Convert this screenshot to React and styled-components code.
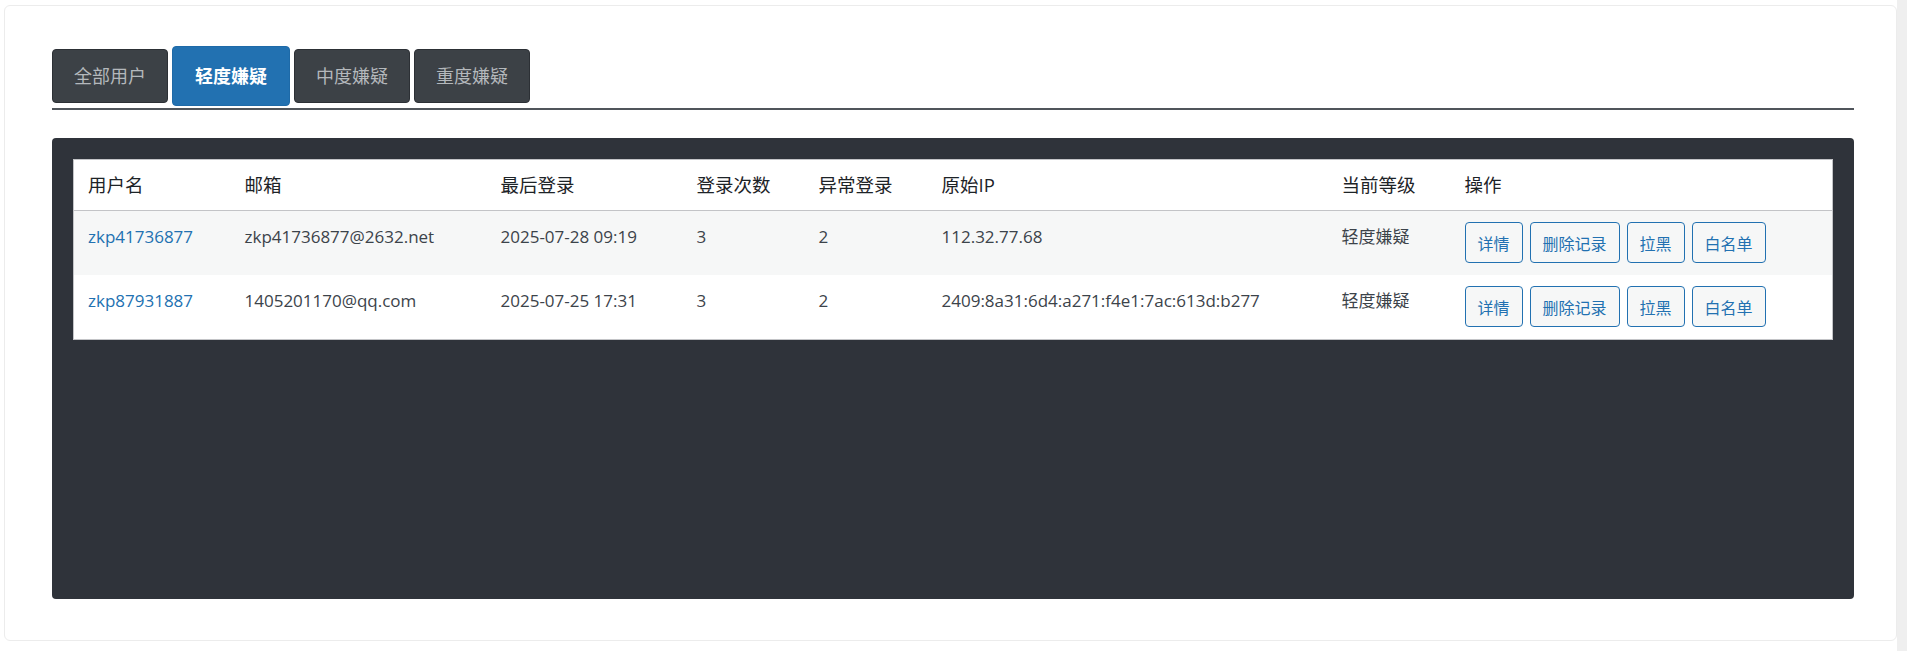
import React from 'react'
import styled, { createGlobalStyle } from 'styled-components'

const GlobalStyle = createGlobalStyle`
  html, body {
    margin: 0;
    padding: 0;
  }
  body {
    background: linear-gradient(to left, #efefef 10px, #ffffff 10px);
    font-family: 'Open Sans', 'Noto Sans CJK SC', sans-serif;
    color: #3c434a;
  }
`

const Page = styled.div`
  padding: 5px 10px 9px 4px;
`

const Card = styled.div`
  background: #fff;
  border: 1px solid #ececec;
  border-radius: 6px;
  padding: 40px 42px 41px 47px;
`

const TabBar = styled.div`
  display: flex;
  align-items: center;
  gap: 4px;
  height: 60px;
  padding-bottom: 2px;
  border-bottom: 2px solid #50555b;
`

const Tab = styled.button`
  font-family: 'Open Sans', 'Noto Sans CJK SC', sans-serif;
  font-size: 18px;
  line-height: 26px;
  border-radius: 4px;
  cursor: pointer;
  border: 1px solid ${p => (p.$active ? '#1e6aa8' : '#2c3035')};
  background: ${p => (p.$active ? '#2271b1' : '#3c4146')};
  color: ${p => (p.$active ? '#ffffff' : '#b4b8bc')};
  font-weight: ${p => (p.$active ? 700 : 400)};
  padding: ${p => (p.$active ? '16px 22px' : '13px 21px')};
`

const Panel = styled.div`
  margin-top: 28px;
  background: #2f333a;
  border-radius: 4px;
  padding: 21px;
  height: 461px;
  box-sizing: border-box;
`

const Table = styled.table`
  width: 100%;
  table-layout: fixed;
  border-collapse: collapse;
  background: #fff;
  border: 1px solid #c3c4c7;
`

const Th = styled.th`
  text-align: left;
  font-weight: 400;
  font-size: 18.5px;
  line-height: 26px;
  color: #1d2327;
  padding: 12px 16px;
  border-bottom: 1px solid #c3c4c7;
  &:first-child {
    padding-left: 14px;
  }
`

const Row = styled.tr`
  background: ${p => (p.$striped ? '#f6f7f7' : '#ffffff')};
`

const Td = styled.td`
  vertical-align: top;
  font-size: 17px;
  line-height: 26px;
  padding: 13px 16px 11px;
  white-space: nowrap;
  color: #3c434a;
  &:first-child {
    padding-left: 14px;
  }
`

const ActionTd = styled(Td)`
  padding: 11px 16px 12px;
`

const UserLink = styled.a`
  color: #2271b1;
  text-decoration: none;
`

const Actions = styled.div`
  display: flex;
  gap: 7px;
`

const ActionButton = styled.button`
  font-family: 'Open Sans', 'Noto Sans CJK SC', sans-serif;
  font-size: 16px;
  height: 41px;
  padding: 0 12px;
  color: #2271b1;
  background: #f6f7f7;
  border: 1px solid #2271b1;
  border-radius: 4px;
  cursor: pointer;
`

const tabs = ['全部用户', '轻度嫌疑', '中度嫌疑', '重度嫌疑']

const columns = [
  { label: '用户名', width: 155 },
  { label: '邮箱', width: 256 },
  { label: '最后登录', width: 196 },
  { label: '登录次数', width: 122 },
  { label: '异常登录', width: 123 },
  { label: '原始IP', width: 400 },
  { label: '当前等级', width: 123 },
  { label: '操作' },
]

const users = [
  {
    name: 'zkp41736877',
    email: 'zkp41736877@2632.net',
    last: '2025-07-28 09:19',
    count: 3,
    abnormal: 2,
    ip: '112.32.77.68',
    level: '轻度嫌疑',
  },
  {
    name: 'zkp87931887',
    email: '1405201170@qq.com',
    last: '2025-07-25 17:31',
    count: 3,
    abnormal: 2,
    ip: '2409:8a31:6d4:a271:f4e1:7ac:613d:b277',
    level: '轻度嫌疑',
  },
]

const actions = ['详情', '删除记录', '拉黑', '白名单']

export default function App() {
  return (
    <>
      <GlobalStyle />
      <Page>
        <Card>
          <TabBar>
            {tabs.map((t, i) => (
              <Tab key={t} $active={i === 1}>
                {t}
              </Tab>
            ))}
          </TabBar>
          <Panel>
            <Table>
              <colgroup>
                {columns.map(c => (
                  <col key={c.label} style={c.width ? { width: c.width } : undefined} />
                ))}
              </colgroup>
              <thead>
                <tr>
                  {columns.map(c => (
                    <Th key={c.label}>{c.label}</Th>
                  ))}
                </tr>
              </thead>
              <tbody>
                {users.map((u, i) => (
                  <Row key={u.name} $striped={i % 2 === 0}>
                    <Td>
                      <UserLink href="#">{u.name}</UserLink>
                    </Td>
                    <Td>{u.email}</Td>
                    <Td>{u.last}</Td>
                    <Td>{u.count}</Td>
                    <Td>{u.abnormal}</Td>
                    <Td>{u.ip}</Td>
                    <Td>{u.level}</Td>
                    <ActionTd>
                      <Actions>
                        {actions.map(a => (
                          <ActionButton key={a}>{a}</ActionButton>
                        ))}
                      </Actions>
                    </ActionTd>
                  </Row>
                ))}
              </tbody>
            </Table>
          </Panel>
        </Card>
      </Page>
    </>
  )
}
